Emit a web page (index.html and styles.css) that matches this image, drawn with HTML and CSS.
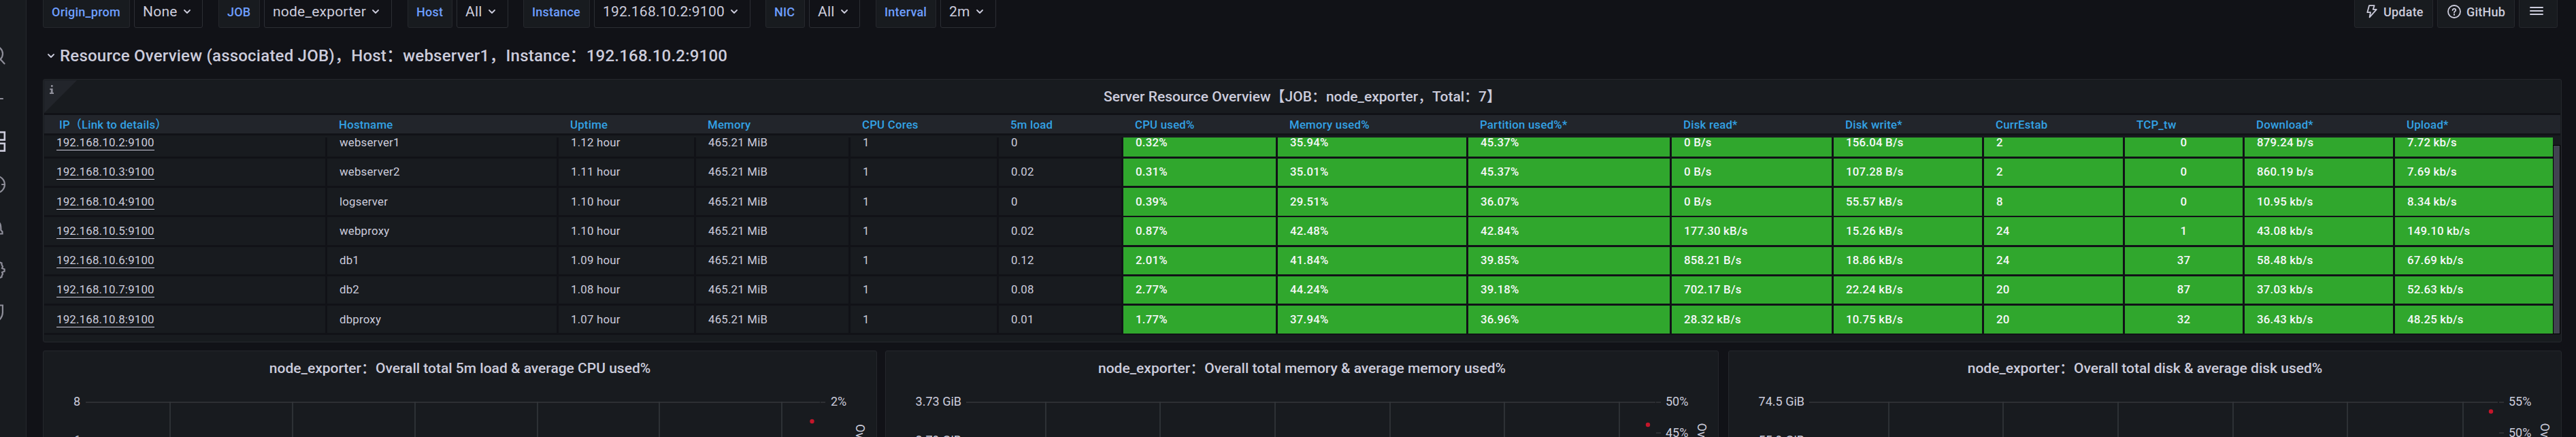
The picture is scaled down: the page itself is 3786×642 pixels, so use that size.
FILE: index.html
```html
<!DOCTYPE html>
<html lang="zh-CN">
<head>
<meta charset="utf-8">
<title>Node Exporter Dashboard</title>
<link rel="stylesheet" href="styles.css">
</head>
<body>
<div class="app">
  <nav class="sidebar">
    <svg class="sidebar-icons" viewBox="0 0 37 642" width="37" height="642" fill="none" stroke="#8e8e99" stroke-width="2.2" stroke-linecap="round">
      <circle cx="-7" cy="79" r="11"/><path d="M1 87.500L6.500 93.500"/>
      <path d="M-18 145H4"/>
      <g stroke="#ccccdc" stroke-width="2.600" stroke-linecap="butt"><rect x="-4" y="194.200" width="10.800" height="11.300"/><rect x="-4" y="210.800" width="10.800" height="10.800"/></g>
      <circle cx="-5.500" cy="271" r="12.400"/><path d="M3 271H7"/>
      <path d="M-1 327C1 329 1.300 332 1.300 335V338L3.500 340.500V343.500H-10"/>
      <path d="M0 385.500L2.500 386.500V389L4 391.500L3 394.200L6.600 395.500V398.500L3 400L4 402.500L2.500 405.500V407L0 408"/>
      <path d="M-10 448.500H3.900V459C3.900 464 2 467 -1 470"/>
    </svg>
  </nav>
  <main class="main">
    <header class="toolbar">
      <div class="var"><span class="label w-origin">Origin_prom</span><span class="value w-none">None<svg class="chev" viewBox="0 0 10 7"><path d="M1 1L5 5L9 1"/></svg></span></div>
      <div class="var"><span class="label w-job">JOB</span><span class="value w-exporter">node_exporter<svg class="chev" viewBox="0 0 10 7"><path d="M1 1L5 5L9 1"/></svg></span></div>
      <div class="var"><span class="label w-host">Host</span><span class="value w-all">All<svg class="chev" viewBox="0 0 10 7"><path d="M1 1L5 5L9 1"/></svg></span></div>
      <div class="var tight"><span class="label w-instance">Instance</span><span class="value w-address">192.168.10.2:9100<svg class="chev" viewBox="0 0 10 7"><path d="M1 1L5 5L9 1"/></svg></span></div>
      <div class="var tight"><span class="label w-nic">NIC</span><span class="value w-nicall">All<svg class="chev" viewBox="0 0 10 7"><path d="M1 1L5 5L9 1"/></svg></span></div>
      <div class="var"><span class="label w-interval">Interval</span><span class="value w-2m">2m<svg class="chev" viewBox="0 0 10 7"><path d="M1 1L5 5L9 1"/></svg></span></div>
      <div class="links">
        <span class="link w-update"><svg class="bolt" viewBox="0 0 16 20"><path d="M4 1.200H11.600L9.800 6.800H14.800L4.600 18.400L6 11.200H1.300Z"/></svg>Update</span>
        <span class="link w-github"><svg class="help" viewBox="0 0 20 20"><circle cx="10" cy="10" r="9"/><path d="M7.600 8C7.600 5.200 12.300 5.300 12.300 8C12.300 9.600 10 9.600 10 11.400"/><path d="M10 13.700V14.900"/></svg>GitHub</span>
        <span class="link w-menu"><svg class="bars" viewBox="0 0 20 12"><path d="M1 1H19M1 6H19M1 11H19"/></svg></span>
      </div>
    </header>
    <h2 class="row-title"><svg class="chev" viewBox="0 0 10 7"><path d="M1 1L5 5L9 1"/></svg><span>Resource Overview (associated JOB)，Host：webserver1，Instance：192.168.10.2:9100</span></h2>

    <section class="panel table-panel">
      <span class="info"><svg class="info-mark" viewBox="0 0 6 13"><path d="M2 0H4.600V2.700H2ZM0.300 5H4.600V11H6V13H0V11H1.700V7H0.300Z"/></svg></span>
      <h3 class="panel-title">Server Resource Overview【JOB：node_exporter，Total：7】</h3>
      <div class="grid head"><span>IP（Link to details）</span><span>Hostname</span><span>Uptime</span><span>Memory</span><span>CPU Cores</span><span>5m load</span><span>CPU used%</span><span>Memory used%</span><span>Partition used%*</span><span>Disk read*</span><span>Disk write*</span><span>CurrEstab</span><span>TCP_tw</span><span>Download*</span><span>Upload*</span></div>
      <div class="body">
        <div class="rows">
          <div class="grid row first"><span><a>192.168.10.2:9100</a></span><span>webserver1</span><span>1.12 hour</span><span>465.21 MiB</span><span>1</span><span>0</span><span>0.32%</span><span>35.94%</span><span>45.37%</span><span>0 B/s</span><span>156.04 B/s</span><span>2</span><span>0</span><span>879.24 b/s</span><span>7.72 kb/s</span></div>
          <div class="grid row"><span><a>192.168.10.3:9100</a></span><span>webserver2</span><span>1.11 hour</span><span>465.21 MiB</span><span>1</span><span>0.02</span><span>0.31%</span><span>35.01%</span><span>45.37%</span><span>0 B/s</span><span>107.28 B/s</span><span>2</span><span>0</span><span>860.19 b/s</span><span>7.69 kb/s</span></div>
          <div class="grid row low"><span><a>192.168.10.4:9100</a></span><span>logserver</span><span>1.10 hour</span><span>465.21 MiB</span><span>1</span><span>0</span><span>0.39%</span><span>29.51%</span><span>36.07%</span><span>0 B/s</span><span>55.57 kB/s</span><span>8</span><span>0</span><span>10.95 kb/s</span><span>8.34 kb/s</span></div>
          <div class="grid row tall"><span><a>192.168.10.5:9100</a></span><span>webproxy</span><span>1.10 hour</span><span>465.21 MiB</span><span>1</span><span>0.02</span><span>0.87%</span><span>42.48%</span><span>42.84%</span><span>177.30 kB/s</span><span>15.26 kB/s</span><span>24</span><span>1</span><span>43.08 kb/s</span><span>149.10 kb/s</span></div>
          <div class="grid row"><span><a>192.168.10.6:9100</a></span><span>db1</span><span>1.09 hour</span><span>465.21 MiB</span><span>1</span><span>0.12</span><span>2.01%</span><span>41.84%</span><span>39.85%</span><span>858.21 B/s</span><span>18.86 kB/s</span><span>24</span><span>37</span><span>58.48 kb/s</span><span>67.69 kb/s</span></div>
          <div class="grid row"><span><a>192.168.10.7:9100</a></span><span>db2</span><span>1.08 hour</span><span>465.21 MiB</span><span>1</span><span>0.08</span><span>2.77%</span><span>44.24%</span><span>39.18%</span><span>702.17 B/s</span><span>22.24 kB/s</span><span>20</span><span>87</span><span>37.03 kb/s</span><span>52.63 kb/s</span></div>
          <div class="grid row low"><span><a>192.168.10.8:9100</a></span><span>dbproxy</span><span>1.07 hour</span><span>465.21 MiB</span><span>1</span><span>0.01</span><span>1.77%</span><span>37.94%</span><span>36.96%</span><span>28.32 kB/s</span><span>10.75 kB/s</span><span>20</span><span>32</span><span>36.43 kb/s</span><span>48.25 kb/s</span></div>
        </div>
        <div class="scrollbar"></div>
      </div>
    </section>

    <div class="charts">
      <section class="panel chart">
        <h3 class="panel-title">node_exporter：Overall total 5m load &amp; average CPU used%</h3>
        <svg class="plot" viewBox="64 566 1224 76" width="1224" height="76">
          <path class="gridline" d="M126 591H1205M1206 591H1213M250 590V642M430 590V642M610 590V642M790 590V642M969 590V642M1149 590V642"/>
          <circle class="dot" cx="1193.500" cy="619" r="3.200"/>
          <text x="118" y="596" text-anchor="end">8</text><text x="118" y="653" text-anchor="end">6</text>
          <text x="1221" y="596">2%</text>
          <text class="axis" transform="translate(1257.500 623) rotate(90)">Overall average used%</text>
        </svg>
      </section>
      <section class="panel chart">
        <h3 class="panel-title">node_exporter：Overall total memory &amp; average memory used%</h3>
        <svg class="plot" viewBox="1302 566 1223 76" width="1223" height="76">
          <path class="gridline" d="M1420 591H2433M2434 591H2441M2434 636H2441M1537 590V642M1705 590V642M1874 590V642M2043 590V642M2211 590V642M2380 590V642"/>
          <circle class="dot" cx="2422" cy="624" r="3.200"/>
          <text x="1413" y="596" text-anchor="end">3.73 GiB</text><text x="1413" y="653" text-anchor="end">2.79 GiB</text>
          <text x="2448" y="596">50%</text><text x="2448" y="642">45%</text>
          <text class="axis" transform="translate(2494.500 621.500) rotate(90)">Overall average used%</text>
        </svg>
      </section>
      <section class="panel chart">
        <h3 class="panel-title">node_exporter：Overall total disk &amp; average disk used%</h3>
        <svg class="plot" viewBox="2541 566 1223 76" width="1223" height="76">
          <path class="gridline" d="M2659 591H3671M3673 591H3680M3673 636H3680M2776 590V642M2944 590V642M3113 590V642M3282 590V642M3450 590V642M3620 590V642"/>
          <circle class="dot" cx="3661" cy="604.500" r="3.200"/>
          <text x="2652" y="596" text-anchor="end">74.5 GiB</text><text x="2652" y="653" text-anchor="end">55.9 GiB</text>
          <text x="3687" y="596">55%</text><text x="3687" y="642">50%</text>
          <text class="axis" transform="translate(3734 621.500) rotate(90)">Overall average used%</text>
        </svg>
      </section>
    </div>
  </main>
</div>
</body>
</html>
```
FILE: styles.css
```css
* { box-sizing: border-box; }
body {
  margin: 0;
  background: #111217;
  color: #ccccdc;
  font-family: Roboto, "Noto Sans CJK SC", sans-serif;
  font-size: 21px;
  letter-spacing: 0.01071em;
  text-spacing-trim: space-all;
}
h2, h3 { margin: 0; font-weight: 500; }
.app { display: flex; height: 642px; overflow: hidden; }
.sidebar { flex: none; width: 39px; background: #181b1f; border-right: 1px solid #25272c; overflow: hidden; }
.sidebar-icons { display: block; }
.main { display: flex; flex-direction: column; width: 3726px; padding-left: 24px; }

/* toolbar: scrolled slightly above the viewport */
.toolbar { display: flex; flex: none; height: 48px; margin-top: -7px; }
.var { display: flex; gap: 6px; }
.var + .var { margin-left: 23px; }
.var + .tight { margin-left: 22px; }
.label, .value, .link {
  display: flex; align-items: center; flex: none; height: 48px;
  border: 1px solid #25272c; border-radius: 3px; padding-left: 12px; white-space: nowrap;
}
.label { background: #181b1f; color: #6e9fff; font-size: 18px; font-weight: 500; }
.value { background: #111217; border-color: #2c2e34; }
.chev { width: 10px; height: 7px; margin-left: 9px; fill: none; stroke: #ccccdc; stroke-width: 1.8; stroke-linecap: round; stroke-linejoin: round; }
.w-origin { width: 128px; } .w-none { width: 101px; }
.w-job { width: 61px; } .w-exporter { width: 188px; }
.w-host { width: 66px; } .w-all { width: 76px; }
.w-instance { width: 98px; } .w-address { width: 230px; }
.w-nic { width: 58px; } .w-nicall { width: 75px; }
.w-interval { width: 89px; } .w-2m { width: 82px; }
.links { display: flex; gap: 6px; margin-left: auto; margin-right: 6px; }
.link { background: #181b1f; font-size: 18px; font-weight: 500; }
.link svg { fill: none; stroke: #ccccdc; stroke-linejoin: round; stroke-linecap: round; stroke-width: 1.8; }
.w-update { width: 116px; padding-left: 17px; }
.w-github { width: 114px; padding-left: 14px; }
.w-menu { width: 57px; padding-left: 15px; }
.bolt { width: 16px; height: 20px; margin-right: 9px; }
.help { width: 20px; height: 20px; margin-right: 8px; }
.bars { width: 20px; height: 12px; margin-bottom: 2px; }
.link .bars { stroke-width: 2; }

.row-title { display: flex; align-items: center; flex: none; height: 75px; padding: 7px 0 0 7px; font-size: 24px; line-height: 36px; white-space: nowrap; }
.row-title .chev { margin: 0 8px 0 0; }

.panel { position: relative; background: #181b1f; border: 1px solid #25272c; border-radius: 3px; }
.panel-title { height: 50px; line-height: 50px; text-align: center; font-size: 21px; letter-spacing: 0; white-space: nowrap; }
.table-panel { flex: none; height: 387px; padding: 0 1px; }
.table-panel .panel-title { height: 49px; }
.info {
  position: absolute; left: 1px; top: 1px; width: 48px; height: 48px; padding: 7px 0 0 8px;
  background: #22252b; clip-path: polygon(0 0, 100% 0, 0 100%);
}
.info-mark { display: block; width: 6px; height: 13px; fill: #8e8e99; }
.grid {
  display: grid;
  grid-template-columns: 416px 340px 202px 227px 218px 183px 227px 280px 299px 238px 221px 207px 176px 221px 232px;
  font-size: 16.8px;
  white-space: nowrap;
}
.head { height: 33px; background: #22252b; border: solid #111217; border-width: 3px 0; color: #33a2e5; font-weight: 500; line-height: 28px; }
.head span { padding-left: 17px; }
.head span:first-child { padding-left: 22px; }
.body { display: flex; padding-top: 3px; }
.rows { width: 3687px; }
.row { height: 43px; border-bottom: 3px solid #111217; line-height: 39px; }
.row.first { height: 31px; line-height: 15px; }
.row.tall { height: 44px; line-height: 41px; }
.row.low { line-height: 41px; }
.row span { padding-left: 18px; border-right: 3px solid #111217; }
.row span:last-child { border-right: 0; }
.row span:nth-child(n+7) { background: rgba(50, 172, 45, 0.97); background-clip: padding-box; color: #f7f8fa; font-weight: 500; }
.row span:nth-child(13) { padding: 0; text-align: center; }
.row a { padding-bottom: 1px; border-bottom: 1px solid #ccccdc; }
.scrollbar { width: 12px; height: 278px; margin-top: 11px; background: #414350; border: 1px solid #000; }

.charts { display: grid; grid-template-columns: 1226px 1225px 1225px; column-gap: 12px; flex: none; height: 140px; margin-top: 12px; }
.charts .chart:last-child { margin-left: 2px; margin-right: -2px; }
.plot { display: block; font-size: 18px; fill: #ccccdc; letter-spacing: 0; }
.gridline { fill: none; stroke: #34373b; stroke-width: 1.6; }
.dot { fill: #c4162a; }
.axis { font-size: 18px; }
```
